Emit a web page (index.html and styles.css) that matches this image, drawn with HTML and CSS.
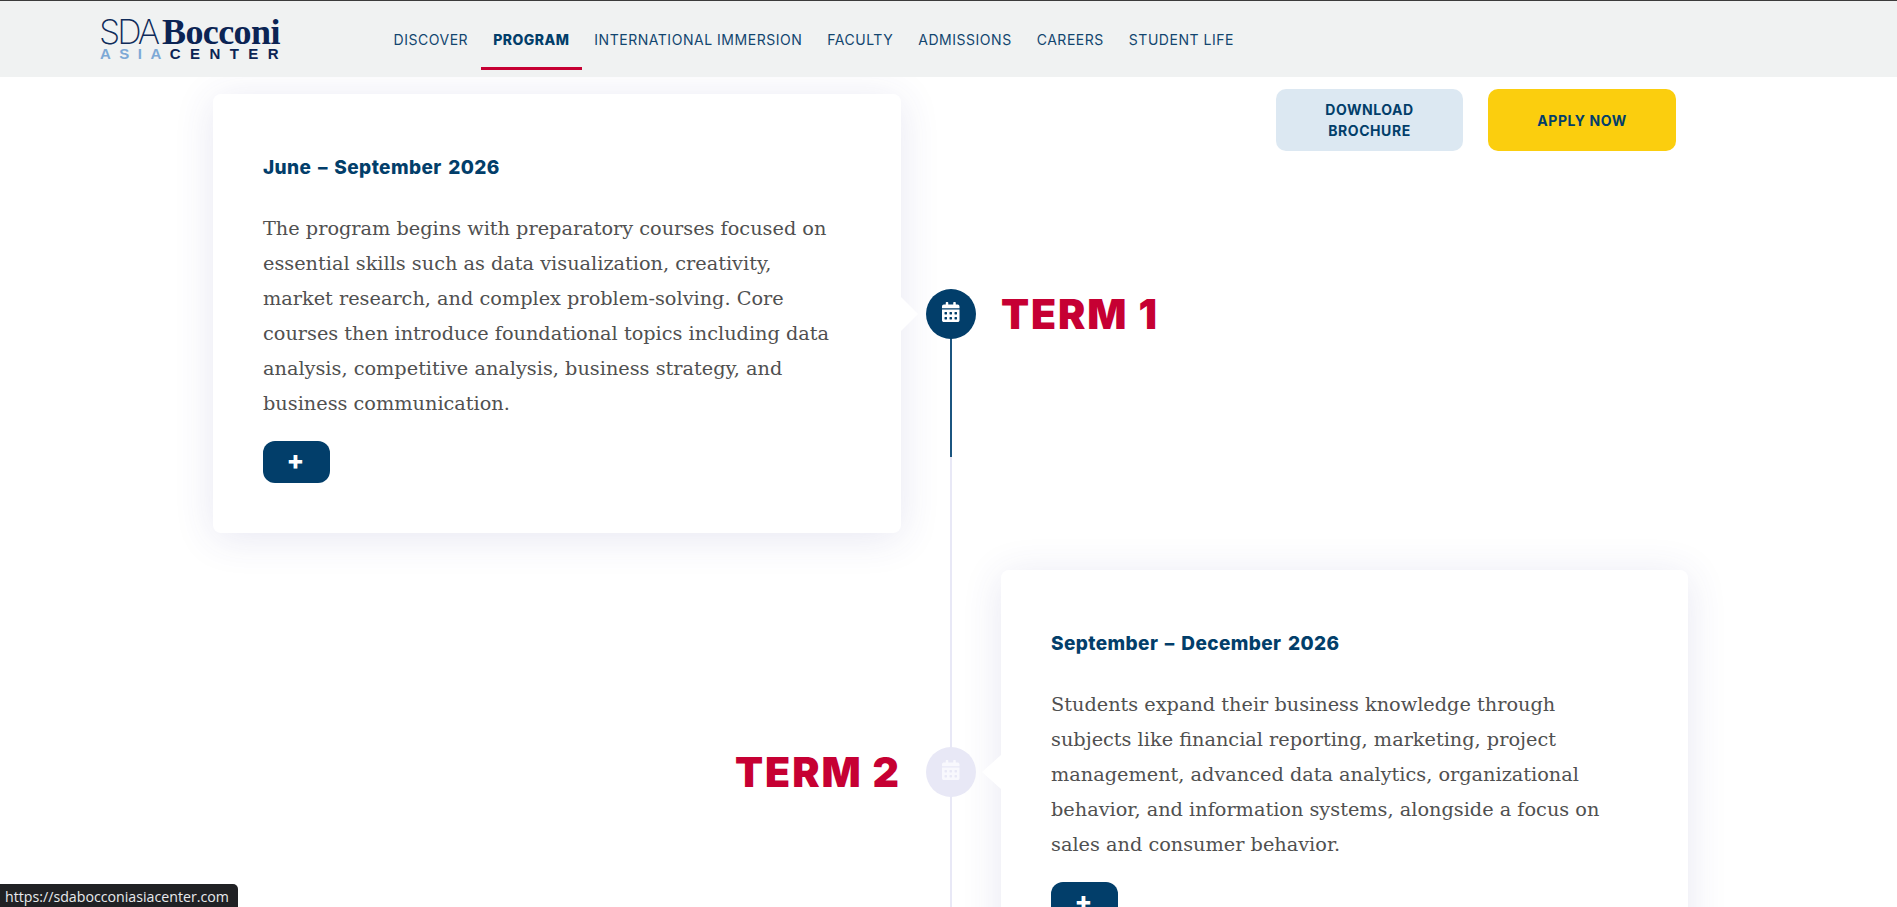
FILE: index.html
```html
<!DOCTYPE html>
<html lang="en">
<head>
<meta charset="utf-8">
<title>SDA Bocconi Asia Center</title>
<link rel="stylesheet" href="styles.css">
</head>
<body>
<header class="topbar">
  <a class="logo" href="#">
    <span class="logo-top"><span class="logo-sda">SDA</span><span class="logo-bocconi">Bocconi</span></span>
    <span class="logo-bottom"><span class="logo-asia">ASIA</span><span class="logo-center">CENTER</span></span>
  </a>
  <nav class="nav">
    <a href="#">DISCOVER</a>
    <a href="#" class="active">PROGRAM</a>
    <a href="#">INTERNATIONAL IMMERSION</a>
    <a href="#">FACULTY</a>
    <a href="#">ADMISSIONS</a>
    <a href="#">CAREERS</a>
    <a href="#">STUDENT LIFE</a>
  </nav>
</header>
<div class="cta">
  <a href="#" class="btn btn-light">DOWNLOAD<br>BROCHURE</a>
  <a href="#" class="btn btn-yellow">APPLY NOW</a>
</div>
<main class="timeline">
  <div class="line"></div>
  <div class="line-progress"></div>

  <article class="card card-left">
    <h3 class="date">June – September 2026</h3>
    <p class="body">The program begins with preparatory courses focused on<br>essential skills such as data visualization, creativity,<br>market research, and complex problem-solving. Core<br>courses then introduce foundational topics including data<br>analysis, competitive analysis, business strategy, and<br>business communication.</p>
    <button class="more">+</button>
  </article>
  <div class="marker marker-on">
    <svg class="cal" viewBox="0 0 448 512"><path d="M0 464c0 26.5 21.5 48 48 48h352c26.5 0 48-21.5 48-48V192H0v272zm320-196c0-6.6 5.4-12 12-12h40c6.6 0 12 5.4 12 12v40c0 6.6-5.4 12-12 12h-40c-6.6 0-12-5.4-12-12v-40zm0 128c0-6.6 5.4-12 12-12h40c6.6 0 12 5.4 12 12v40c0 6.6-5.4 12-12 12h-40c-6.6 0-12-5.4-12-12v-40zM192 268c0-6.6 5.4-12 12-12h40c6.6 0 12 5.4 12 12v40c0 6.6-5.4 12-12 12h-40c-6.6 0-12-5.4-12-12v-40zm0 128c0-6.6 5.4-12 12-12h40c6.6 0 12 5.4 12 12v40c0 6.6-5.4 12-12 12h-40c-6.6 0-12-5.4-12-12v-40zM64 268c0-6.6 5.4-12 12-12h40c6.6 0 12 5.4 12 12v40c0 6.6-5.4 12-12 12H76c-6.6 0-12-5.4-12-12v-40zm0 128c0-6.6 5.4-12 12-12h40c6.6 0 12 5.4 12 12v40c0 6.6-5.4 12-12 12H76c-6.6 0-12-5.4-12-12v-40zM400 64h-48V16c0-8.8-7.2-16-16-16h-32c-8.8 0-16 7.2-16 16v48H160V16c0-8.8-7.2-16-16-16h-32c-8.8 0-16 7.2-16 16v48H48C21.5 64 0 85.5 0 112v48h448v-48c0-26.5-21.5-48-48-48z"/></svg>
  </div>
  <h2 class="term term-right">TERM 1</h2>

  <h2 class="term term-left">TERM 2</h2>
  <div class="marker marker-off">
    <svg class="cal" viewBox="0 0 448 512"><path d="M0 464c0 26.5 21.5 48 48 48h352c26.5 0 48-21.5 48-48V192H0v272zm320-196c0-6.6 5.4-12 12-12h40c6.6 0 12 5.4 12 12v40c0 6.6-5.4 12-12 12h-40c-6.6 0-12-5.4-12-12v-40zm0 128c0-6.6 5.4-12 12-12h40c6.6 0 12 5.4 12 12v40c0 6.6-5.4 12-12 12h-40c-6.6 0-12-5.4-12-12v-40zM192 268c0-6.6 5.4-12 12-12h40c6.6 0 12 5.4 12 12v40c0 6.6-5.4 12-12 12h-40c-6.6 0-12-5.4-12-12v-40zm0 128c0-6.6 5.4-12 12-12h40c6.6 0 12 5.4 12 12v40c0 6.6-5.4 12-12 12h-40c-6.6 0-12-5.4-12-12v-40zM64 268c0-6.6 5.4-12 12-12h40c6.6 0 12 5.4 12 12v40c0 6.6-5.4 12-12 12H76c-6.6 0-12-5.4-12-12v-40zm0 128c0-6.6 5.4-12 12-12h40c6.6 0 12 5.4 12 12v40c0 6.6-5.4 12-12 12H76c-6.6 0-12-5.4-12-12v-40zM400 64h-48V16c0-8.8-7.2-16-16-16h-32c-8.8 0-16 7.2-16 16v48H160V16c0-8.8-7.2-16-16-16h-32c-8.8 0-16 7.2-16 16v48H48C21.5 64 0 85.5 0 112v48h448v-48c0-26.5-21.5-48-48-48z"/></svg>
  </div>
  <article class="card card-right">
    <h3 class="date">September – December 2026</h3>
    <p class="body">Students expand their business knowledge through<br>subjects like financial reporting, marketing, project<br>management, advanced data analytics, organizational<br>behavior, and information systems, alongside a focus on<br>sales and consumer behavior.</p>
    <button class="more">+</button>
  </article>
</main>
<div class="status">https://sdabocconiasiacenter.com</div>
</body>
</html>
```

FILE: styles.css
```css
* { box-sizing: border-box; }
html, body { margin: 0; height: 907px; overflow: hidden; background: #fff; }
body { position: relative; font-family: "Inter", "Liberation Sans", sans-serif; }
a { text-decoration: none; color: inherit; }

.topbar {
  height: 77px;
  background: #f0f2f2;
  border-top: 1px solid #3c3c3c;
  display: flex;
  align-items: stretch;
  padding-left: 100px;
  position: relative;
  z-index: 3;
}
.logo { width: 180px; padding-top: 15px; display: flex; flex-direction: column; }
.logo-top { display: flex; align-items: baseline; height: 31px; line-height: 31px; }
.logo-sda { font-family: "Inter", sans-serif; font-weight: 200; font-size: 34px; letter-spacing: -3px; color: #0f2b5a; width: 62px; margin-left: -1px; }
.logo-bocconi { font-family: "Liberation Serif", serif; font-weight: 700; font-size: 36px; letter-spacing: -.6px; color: #0b2454; margin-left: 1px; }
.logo-bottom { display: flex; height: 14px; line-height: 14px; font-family: "Liberation Sans", sans-serif; font-weight: 700; font-size: 15px; }
.logo-asia { color: #7da9d6; letter-spacing: 8.5px; width: 70px; }
.logo-center { color: #0b2454; letter-spacing: 9.4px; }

.nav { display: flex; margin-left: 101px; }
.nav a {
  display: flex; align-items: center;
  padding: 10px 12.5px 0;
  height: 69px;
  font-size: 14px;
  letter-spacing: .53px;
  color: #12466f;
  border-bottom: 3px solid transparent;
}
.nav a.active {
  font-weight: 800;
  letter-spacing: .45px;
  color: #023e6a;
  border-bottom-color: #c60033;
}

.cta {
  position: absolute; top: 89px; right: 221px;
  display: flex; gap: 25px; z-index: 2;
}
.btn {
  width: 188px; height: 62px;
  border-radius: 10px;
  display: flex; align-items: center; justify-content: center;
  text-align: center;
  font-size: 14px; font-weight: 700; line-height: 21px; letter-spacing: .55px;
  color: #023e6a;
}
.btn-light { width: 187px; background: #dce8f2; }
.btn-yellow { background: #fbce0e; }

.timeline {
  position: relative;
  margin: 17px 0 0 213px;
  width: 1475px;
  display: grid;
  grid-template-columns: 688px 50px 687px;
  column-gap: 25px;
  row-gap: 37px;
  align-items: center;
}
.line { position: absolute; left: 737px; top: 230px; width: 2px; height: 700px; background: #e8e8f6; }
.line-progress { position: absolute; left: 737px; top: 230px; width: 2px; height: 133px; background: #1b5580; }

.card {
  position: relative;
  background: #fff;
  border-radius: 8px;
  padding: 62px 50px 50px;
  box-shadow: 0 5px 40px rgba(60, 60, 150, .12);
}
.card-left::after, .card-right::after {
  content: ""; position: absolute; top: 50%; margin-top: -17px;
  border-top: 17px solid transparent; border-bottom: 17px solid transparent;
}
.card-left::after { left: 100%; border-left: 17px solid #fff; }
.card-right::after { right: 100%; border-right: 19px solid #fff; }

.date { margin: 0 0 31px; font-size: 19px; font-weight: 800; line-height: 24px; letter-spacing: .4px; word-spacing: 2px; color: #023e6a; }
.body {
  margin: 0 0 20px;
  font-family: "DejaVu Serif", serif;
  font-size: 19.3px; line-height: 35px;
  color: #505050;
}
.more {
  display: block; width: 67px; height: 42px;
  padding: 0 2px 4px 0;
  border: 0; border-radius: 12px;
  background: #023e6a; color: #fff;
  font-family: "Inter", sans-serif; font-size: 26px; font-weight: 800; line-height: 1;
}

.marker {
  position: relative; z-index: 1;
  width: 50px; height: 50px; border-radius: 50%;
  display: flex; align-items: center; justify-content: center;
  padding-bottom: 4px;
}
.marker-on { background: #023e6a; }
.marker-off { background: #e8e8f6; }
.cal { width: 17.5px; height: 20px; fill: #fff; }
.marker-off .cal { fill: #f8f8fd; }

.term {
  margin: 0;
  font-size: 41px; font-weight: 900; line-height: 48px; letter-spacing: 1.9px;
  color: #c60033;
}
.term-left { text-align: right; }

.status {
  position: fixed; left: 0; bottom: 0;
  width: 238px; height: 23px;
  padding: 3px 0 0 5px;
  background: #202124;
  border-top-right-radius: 5px;
  color: #e8eaed;
  font-family: "Open Sans", sans-serif; font-size: 14.2px; line-height: 20px;
  white-space: nowrap;
  z-index: 5;
}
```
